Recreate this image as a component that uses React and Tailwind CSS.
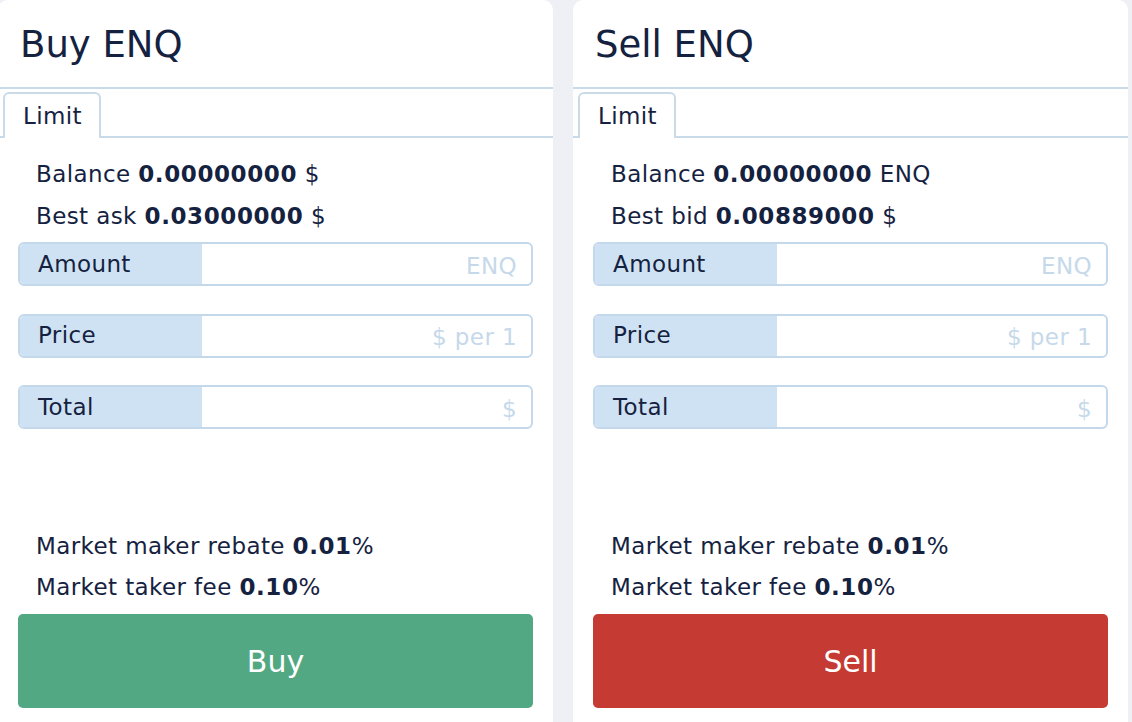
const fields = [
  { label: 'Amount', unit: 'ENQ' },
  { label: 'Price', unit: '$ per 1' },
  { label: 'Total', unit: '$' },
];

const Num = ({ children }) => <b className="tracking-[0.6px]">{children}</b>;

const OrderPanel = ({ title, balance, balanceUnit, bestLabel, best, action, buttonClass }) => {
  return (
    <div className="flex-1 bg-white rounded-t-[10px] flex flex-col">
      {/* Header */}
      <div className="h-[89px] flex items-center px-[22px] border-b-2 border-[#c9dbe9]">
        <h2 className="text-[37px] leading-none tracking-normal pt-[2px]">{title}</h2>
      </div>

      {/* Tabs */}
      <div className="flex pt-[3px] pl-[5px] border-b-2 border-[#c9dbe9]">
        <div className="-mb-[2px] bg-white border-2 border-b-0 border-[#c9dbe9] rounded-t-[6px] pl-[18px] pr-[17px] h-[46px] flex items-center">
          Limit
        </div>
      </div>

      <div className="px-5 pt-[15px] pb-5 flex flex-col">
        <div className="px-[18px]">
          <p className="leading-[42px]">
            Balance <Num>{balance}</Num> {balanceUnit}
          </p>
          <p className="leading-[42px]">
            {bestLabel} <Num>{best}</Num> $
          </p>
        </div>

        <div className="mt-[5px] flex flex-col gap-[27.5px]">
          {fields.map((f) => (
            <div
              key={f.label}
              className="h-[44px] flex border-2 border-[#c3d8eb] rounded-[6px] overflow-hidden"
            >
              <div className="w-[182px] bg-[#cfe2f3] flex items-center pl-[18px]">{f.label}</div>
              <input
                className="flex-1 min-w-0 text-right pr-[14px] pt-[4px] outline-none tracking-[0.4px] placeholder:text-[#c6d9ea]"
                placeholder={f.unit}
              />
            </div>
          ))}
        </div>

        <div className="mt-[97px] px-[18px]">
          <p className="leading-[41px]">
            Market maker rebate <Num>0.01</Num>%
          </p>
          <p className="leading-[41px]">
            Market taker fee <Num>0.10</Num>%
          </p>
        </div>

        <button
          className={`mt-[6px] h-[94px] rounded-[5px] text-white text-[30px] tracking-normal ${buttonClass}`}
        >
          {action}
        </button>
      </div>
    </div>
  );
};

export default function App() {
  return (
    <div className="min-h-screen bg-[#eef0f6] overflow-hidden font-['DejaVu_Sans',sans-serif] text-[23px] tracking-[0.4px] text-[#15223f]">
      <div className="flex gap-5 -ml-[2px] w-[1134px] pr-[4px]">
        <OrderPanel
          title="Buy ENQ"
          balance="0.00000000"
          balanceUnit="$"
          bestLabel="Best ask"
          best="0.03000000"
          action="Buy"
          buttonClass="bg-[#52a883]"
        />
        <OrderPanel
          title="Sell ENQ"
          balance="0.00000000"
          balanceUnit="ENQ"
          bestLabel="Best bid"
          best="0.00889000"
          action="Sell"
          buttonClass="bg-[#c53a32]"
        />
      </div>
    </div>
  );
}
